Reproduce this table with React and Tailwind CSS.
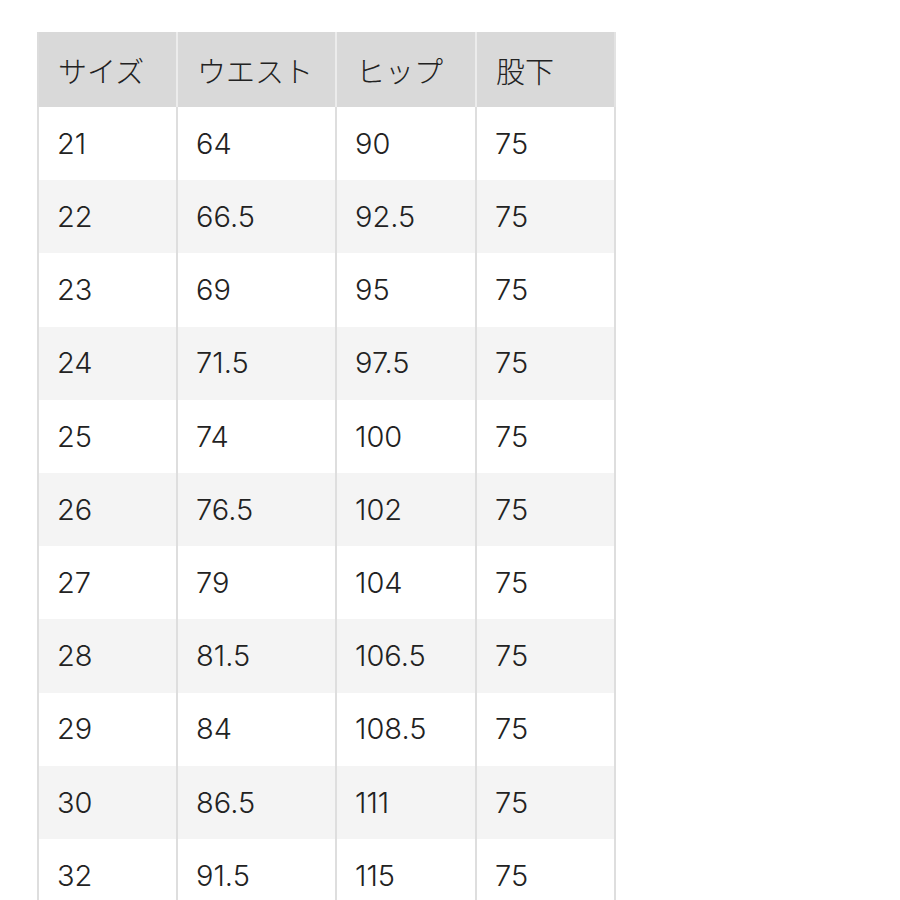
import React from "react";

const headers = ["サイズ", "ウエスト", "ヒップ", "股下"];

const rows = [
  ["21", "64", "90", "75"],
  ["22", "66.5", "92.5", "75"],
  ["23", "69", "95", "75"],
  ["24", "71.5", "97.5", "75"],
  ["25", "74", "100", "75"],
  ["26", "76.5", "102", "75"],
  ["27", "79", "104", "75"],
  ["28", "81.5", "106.5", "75"],
  ["29", "84", "108.5", "75"],
  ["30", "86.5", "111", "75"],
  ["32", "91.5", "115", "75"],
];

// cell widths incl. left border
const widths = ["w-[139px]", "w-[159px]", "w-[140px]", "w-[141px]"];

const App = () => {
  return (
    <div className="h-[900px] overflow-hidden bg-white pl-[37px] pt-[32px] text-[#222]">
      <div
        className="flex h-[75px] w-[579px] bg-[#d9d9d9] font-light"
        style={{ fontFamily: '"Noto Sans CJK JP", sans-serif' }}
      >
        {headers.map((h, i) => (
          <div
            key={h}
            className={`${widths[i]} flex items-center border-l-2 pl-[19px] pt-[2px] text-[29px] ${
              i === 0 ? "border-[#dcdcdc]" : "border-[#ececec]"
            } ${i === 3 ? "border-r-2 border-r-[#e3e3e3]" : ""}`}
          >
            {h}
          </div>
        ))}
      </div>
      {rows.map((row, r) => (
        <div
          key={row[0]}
          className={`flex h-[73.2px] w-[579px] font-light ${r % 2 === 1 ? "bg-[#f4f4f4]" : "bg-white"}`}
          style={{ fontFamily: 'Inter, "Liberation Sans", sans-serif' }}
        >
          {row.map((cell, i) => (
            <div
              key={i}
              className={`${widths[i]} flex items-center border-l-2 border-[#dedede] pl-[18px] text-[29px] ${
                i === 3 ? "border-r-2" : ""
              }`}
            >
              {cell}
            </div>
          ))}
        </div>
      ))}
    </div>
  );
};

export default App;
